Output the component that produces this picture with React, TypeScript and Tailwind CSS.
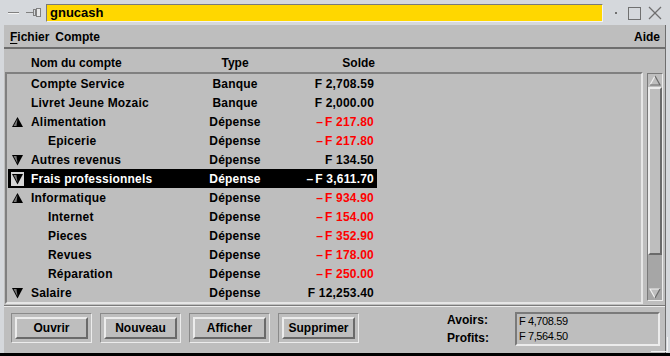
import React from 'react';

type Row = {
  name: string;
  type: string;
  amount: string;
  level?: number;
  tri?: 'up' | 'down';
  red?: boolean;
  selected?: boolean;
};

const rows: Row[] = [
  { name: 'Compte Service', type: 'Banque', amount: 'F 2,708.59' },
  { name: 'Livret Jeune Mozaic', type: 'Banque', amount: 'F 2,000.00' },
  { name: 'Alimentation', type: 'Dépense', amount: '-F 217.80', tri: 'up', red: true },
  { name: 'Epicerie', type: 'Dépense', amount: '-F 217.80', level: 1, red: true },
  { name: 'Autres revenus', type: 'Dépense', amount: 'F 134.50', tri: 'down' },
  { name: 'Frais professionnels', type: 'Dépense', amount: '-F 3,611.70', tri: 'down', selected: true },
  { name: 'Informatique', type: 'Dépense', amount: '-F 934.90', tri: 'up', red: true },
  { name: 'Internet', type: 'Dépense', amount: '-F 154.00', level: 1, red: true },
  { name: 'Pieces', type: 'Dépense', amount: '-F 352.90', level: 1, red: true },
  { name: 'Revues', type: 'Dépense', amount: '-F 178.00', level: 1, red: true },
  { name: 'Réparation', type: 'Dépense', amount: '-F 250.00', level: 1, red: true },
  { name: 'Salaire', type: 'Dépense', amount: 'F 12,253.40', tri: 'down' },
];

const Triangle = ({ dir, sel }: { dir: 'up' | 'down'; sel?: boolean }) => (
  <svg width="13" height="14" viewBox="0 0 13 14" className="block">
    {sel && <rect x="0" y="0" width="13" height="14" fill="#d6d6d6" />}
    {dir === 'up' ? (
      <>
        <polygon points="1,12 6.5,2 12,12" fill="#000" />
        <polygon points="2.5,11 6.5,3.8 5.5,11" fill="#777" />
      </>
    ) : (
      <>
        <polygon points="1,2 12,2 6.5,12.5" fill="#000" />
        <polygon points="2.5,3 5.5,3 6.5,10.5" fill="#777" />
      </>
    )}
  </svg>
);

const ArrowUp = () => (
  <svg width="12" height="11" viewBox="0 0 12 11" className="block">
    <polygon points="1,10 6,1 11,10" fill="#bebebe" />
    <polyline points="1,10 6,1" stroke="#f0f0f0" strokeWidth="1.2" fill="none" />
    <polyline points="6,1 11,10 1,10" stroke="#6a6a6a" strokeWidth="1.2" fill="none" />
  </svg>
);

const ArrowDown = () => (
  <svg width="12" height="11" viewBox="0 0 12 11" className="block">
    <polygon points="1,1 11,1 6,10" fill="#bebebe" />
    <polyline points="6,10 1,1 11,1" stroke="#f0f0f0" strokeWidth="1.2" fill="none" />
    <polyline points="11,1 6,10" stroke="#6a6a6a" strokeWidth="1.2" fill="none" />
  </svg>
);

const TitleBar = () => (
  <div className="flex h-[25px] items-center bg-[#d5d8dc]">
    {/* window menu + pin */}
    <svg width="44" height="25" viewBox="0 0 44 25" className="block shrink-0">
      <line x1="8" y1="12.5" x2="19" y2="12.5" stroke="#808080" strokeWidth="1" />
      <line x1="8" y1="13.5" x2="19" y2="13.5" stroke="#f4f4f4" strokeWidth="1" />
      <line x1="26" y1="12.5" x2="33" y2="12.5" stroke="#808080" strokeWidth="1" />
      <rect x="33.5" y="9.5" width="2" height="6" fill="none" stroke="#808080" strokeWidth="1" />
      <rect x="36.5" y="8.5" width="4" height="8" fill="#e8e8e8" stroke="#808080" strokeWidth="1" />
    </svg>
    <div className="ml-[2px] flex h-[18px] w-[557px] items-center border-t border-l border-[#7a7a7a] border-r border-b border-r-[#f2f2f2] border-b-[#f2f2f2] bg-[#ffd700] pl-[3px] text-[13px] font-bold text-black">
      gnucash
    </div>
    <svg width="67" height="25" viewBox="0 0 67 25" className="block shrink-0">
      <rect x="12" y="12" width="2" height="2" fill="#707070" />
      <rect x="25.5" y="7.5" width="12" height="12" fill="none" stroke="#707070" strokeWidth="1" />
      <line x1="46" y1="7" x2="58" y2="19" stroke="#707070" strokeWidth="1.2" />
      <line x1="58" y1="7" x2="46" y2="19" stroke="#707070" strokeWidth="1.2" />
    </svg>
  </div>
);

const MenuBar = () => (
  <div className="flex h-[24px] items-center justify-between border-b-2 border-[#6e6e6e] pl-[6px] pr-[5px] pt-[2px] text-[12px] font-bold">
    <div className="flex gap-[6px]">
      <span>
        <span className="underline decoration-1 underline-offset-2">F</span>ichier
      </span>
      <span>Compte</span>
    </div>
    <span>Aide</span>
  </div>
);

const Amount = ({ value }: { value: string }) =>
  value.startsWith('-') ? (
    <>
      <span className="mr-[2px]">–</span>
      {value.slice(1)}
    </>
  ) : (
    <>{value}</>
  );

const AccountRow = ({ r }: { r: Row }) => {
  const textColor = r.selected ? 'text-white' : 'text-black';
  const amountColor = r.selected ? 'text-white' : r.red ? 'text-[#ff0000]' : 'text-black';
  return (
    <div className="flex h-[19px] pl-[1px]">
      <div className={`flex w-[369px] items-center ${r.selected ? 'bg-black' : ''}`}>
        <div className="flex w-[197px] items-center">
          <div className="ml-[3px] w-[20px]">{r.tri && <Triangle dir={r.tri} sel={r.selected} />}</div>
          <span className={`${r.level ? 'ml-[17px]' : 'ml-[0px]'} ${textColor}`}>{r.name}</span>
        </div>
        <div className={`w-[60px] text-center ${textColor}`}>{r.type}</div>
        <div className={`w-[112px] pr-[3px] text-right ${amountColor}`}>
          <Amount value={r.amount} />
        </div>
      </div>
    </div>
  );
};

const ScrollBar = () => (
  <div className="mt-[1px] flex h-[228px] w-[16px] flex-col border border-t-[#7a7a7a] border-l-[#7a7a7a] border-r-[#ececec] border-b-[#ececec] bg-[#a6a6a6]">
    <div className="flex h-[13px] items-center justify-center bg-[#bebebe]">
      <ArrowUp />
    </div>
    <div className="h-[168px] border-2 border-t-[#ececec] border-l-[#ececec] border-r-[#6a6a6a] border-b-[#6a6a6a] bg-[#bebebe]" />
    <div className="flex-1" />
    <div className="flex h-[13px] items-center justify-center">
      <ArrowDown />
    </div>
  </div>
);

const Button = ({ label }: { label: string }) => (
  <div className="h-[30px] w-[81px] border border-t-[#8a8a8a] border-l-[#8a8a8a] border-r-[#ececec] border-b-[#ececec] p-[3px]">
    <div className="flex h-full w-full items-center justify-center border-2 border-t-[#ececec] border-l-[#ececec] border-r-[#6a6a6a] border-b-[#6a6a6a] text-[12px] font-bold">
      {label}
    </div>
  </div>
);

export default function App() {
  return (
    <div
      className="relative h-[356px] w-[670px] overflow-hidden bg-[#d5d8dc] text-[12px] text-black"
      style={{ fontFamily: '"Liberation Sans", Arial, sans-serif' }}
    >
      <TitleBar />
      <div className="ml-[4px] flex h-[328px] w-[662px] flex-col border-r border-[#6e6e6e] bg-[#bebebe]">
        <MenuBar />

        {/* column headers */}
        <div className="ml-[4px] mt-[5px] flex h-[18px] items-center font-bold">
          <div className="w-[197px] pl-[23px]">Nom du compte</div>
          <div className="w-[60px] text-center">Type</div>
          <div className="w-[112px] pr-[2px] text-right">Solde</div>
        </div>

        {/* account list */}
        <div className="flex">
          <div className="ml-[1px] h-[232px] w-[638px] overflow-hidden border-2 border-t-[#808080] border-l-[#808080] border-r-[#e6e6e6] border-b-[#e6e6e6] font-bold tracking-[0.2px]">
            {rows.map((r) => (
              <AccountRow key={r.name} r={r} />
            ))}
          </div>
          <div className="ml-[4px]">
            <ScrollBar />
          </div>
        </div>

        {/* separator */}
        <div className="mt-[1px] h-[2px] border-t border-b border-t-[#7a7a7a] border-b-[#ececec]" />

        {/* bottom bar */}
        <div className="mt-[6px] flex items-start">
          <div className="ml-[7px] flex gap-[8px]">
            <Button label="Ouvrir" />
            <Button label="Nouveau" />
            <Button label="Afficher" />
            <Button label="Supprimer" />
          </div>
          <div className="ml-[88px] -mt-[1px] flex w-[68px] flex-col gap-[2px] text-[12px] font-bold leading-[16px]">
            <span>Avoirs:</span>
            <span>Profits:</span>
          </div>
          <div className="-mt-[1px] h-[34px] w-[145px] border-2 border-t-[#7a7a7a] border-l-[#7a7a7a] border-r-[#ececec] border-b-[#ececec] pl-[2px] text-[11px] leading-[15px] tracking-[-0.4px]">
            <div>F 4,708.59</div>
            <div>F 7,564.50</div>
          </div>
        </div>
      </div>
      <div className="h-[3px] w-full bg-black" />

      {/* resize corner */}
      <div className="absolute left-[651px] top-[337px] h-[15px] w-[17px] border-r border-b border-[#f2f2f2]" />
    </div>
  );
}
